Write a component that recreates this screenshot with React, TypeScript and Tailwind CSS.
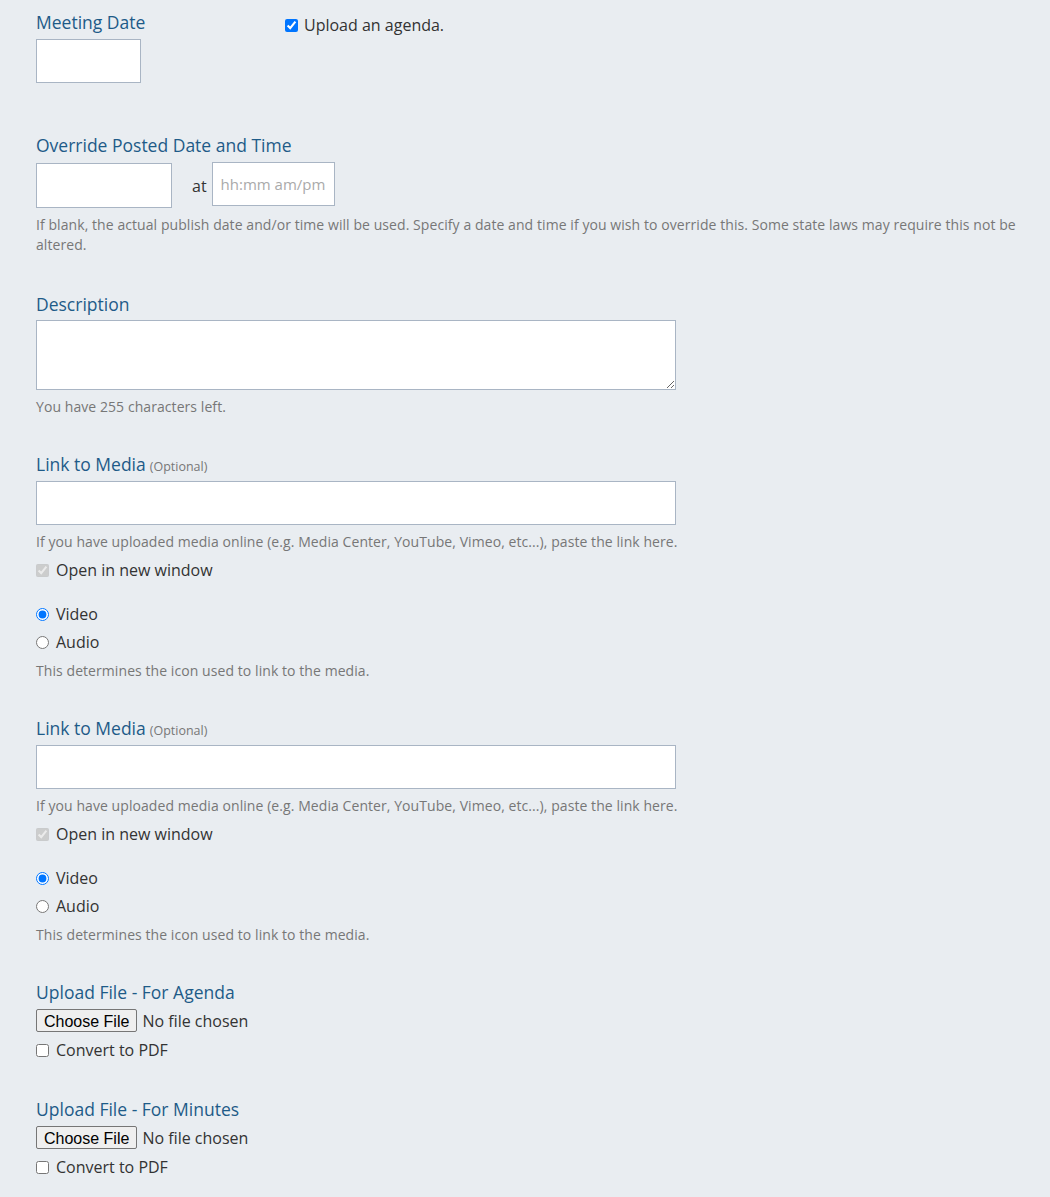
import React from "react";

const font = "font-['Open_Sans',sans-serif]";

const Label = ({ children, optional }: { children: React.ReactNode; optional?: boolean }) => (
  <div className="text-[17.5px] leading-[24px] text-[#1e5b88]">
    {children}
    {optional && <span className="ml-[4px] text-[12.5px] leading-none text-[#777]">(Optional)</span>}
  </div>
);

const Help = ({ children, className = "" }: { children: React.ReactNode; className?: string }) => (
  <p className={`text-[14px] leading-[20px] tracking-[0.07px] text-[#777] ${className}`}>{children}</p>
);

const Check = ({ label, checked, disabled }: { label: string; checked?: boolean; disabled?: boolean }) => (
  <label className="flex items-center gap-[7px] h-[20px] text-[16px] text-[#333]">
    <input type="checkbox" defaultChecked={checked} disabled={disabled} className="w-[13px] h-[13px] m-0" />
    {label}
  </label>
);

const Radio = ({ label, checked, name }: { label: string; checked?: boolean; name: string }) => (
  <label className="flex items-center gap-[7px] h-[20px] text-[16px] text-[#333]">
    <input type="radio" name={name} defaultChecked={checked} className="w-[13px] h-[13px] m-0" />
    {label}
  </label>
);

const MediaBlock = ({ name }: { name: string }) => (
  <div className="mt-[35px]">
    <Label optional>Link to Media</Label>
    <input
      type="text"
      className="mt-[5px] block w-[640px] h-[44px] bg-white border border-[#a9b5c4]"
    />
    <Help className="mt-[7px]">
      If you have uploaded media online (e.g. Media Center, YouTube, Vimeo, etc...), paste the link here.
    </Help>
    <div className="mt-[8px]">
      <Check label="Open in new window" checked disabled />
    </div>
    <div className="mt-[24px] flex flex-col gap-[8px]">
      <Radio name={name} label="Video" checked />
      <Radio name={name} label="Audio" />
    </div>
    <Help className="mt-[9px]">This determines the icon used to link to the media.</Help>
  </div>
);

const UploadBlock = ({ title, className = "" }: { title: string; className?: string }) => (
  <div className={className}>
    <Label>{title}</Label>
    <input
      type="file"
      className="mt-[5px] block h-[24px] text-[16px] text-[#333] file:font-['Liberation_Sans',sans-serif] file:text-[16px] file:text-black file:h-[23px] file:px-[7px] file:mr-[5px] file:bg-[#efefef] file:border file:border-[#767676] file:rounded-[2px]"
    />
    <div className="mt-[7px]">
      <Check label="Convert to PDF" />
    </div>
  </div>
);

export default function App() {
  return (
    <div className={`${font} bg-[#e9edf1] min-h-[1197px] pl-[36px] pr-[20px] pt-[10px]`}>
      <div className="flex">
        <div className="w-[249px]">
          <Label>Meeting Date</Label>
          <input type="text" className="mt-[5px] block w-[105px] h-[44px] bg-white border border-[#a9b5c4]" />
        </div>
        <label className="mt-[5px] flex items-center gap-[6px] h-[20px] text-[16px] text-[#333]">
          <input type="checkbox" defaultChecked className="w-[13px] h-[13px] m-0" />
          Upload an agenda.
        </label>
      </div>

      <div className="mt-[50px]">
        <Label>Override Posted Date and Time</Label>
        <div className="mt-[6px] flex items-start">
          <input type="text" className="block w-[136px] h-[45px] bg-white border border-[#a9b5c4]" />
          <span className="ml-[20px] mr-[5px] mt-[11px] text-[16px] text-[#333]">at</span>
          <input
            type="text"
            placeholder="hh:mm am/pm"
            className="-mt-[1px] block w-[123px] h-[44px] px-[8px] bg-white border border-[#a9b5c4] text-[15px] placeholder:text-[#aaa]"
          />
        </div>
        <Help className="mt-[7px] tracking-[0.1px]">
          If blank, the actual publish date and/or time will be used. Specify a date and time if you wish to override
          this. Some state laws may require this not be altered.
        </Help>
      </div>

      <div className="mt-[37px]">
        <Label>Description</Label>
        <textarea className="mt-[4px] block w-[640px] h-[70px] bg-white border border-[#a9b5c4]" />
        <Help className="mt-[7px]">You have 255 characters left.</Help>
      </div>

      <MediaBlock name="media1" />
      <MediaBlock name="media2" />

      <UploadBlock title="Upload File - For Agenda" className="mt-[35px]" />
      <UploadBlock title="Upload File - For Minutes" className="mt-[37px]" />
    </div>
  );
}
